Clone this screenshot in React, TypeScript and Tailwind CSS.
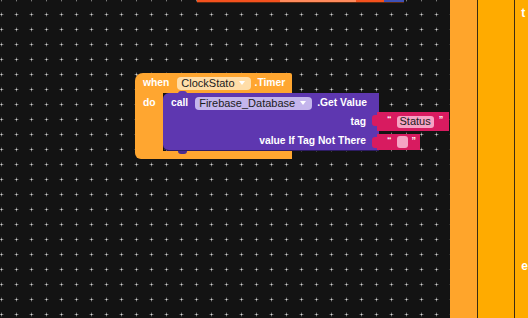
import React from "react";

function Caret({ className }: { className?: string }) {
  return (
    <svg width="6" height="4" viewBox="0 0 6 4" className={className}>
      <path d="M0 0h6L3 4z" fill="currentColor" />
    </svg>
  );
}

function InputTab() {
  return (
    <svg
      className="absolute left-[-5px] top-[3px]"
      width="6"
      height="11"
      viewBox="0 0 6 11"
    >
      <path d="M6 0H3C1 0 0 1 0 3v5c0 2 1 3 3 3h3z" fill="#D81B60" />
    </svg>
  );
}

function GridDots() {
  return (
    <svg className="pointer-events-none absolute inset-0 h-full w-full">
      <defs>
        <pattern
          id="ws-grid"
          x="-6"
          y="7"
          width="15"
          height="15"
          patternUnits="userSpaceOnUse"
        >
          <rect x="6" y="7" width="3" height="1" fill="#7a7a7a" />
          <rect x="7" y="6" width="1" height="3" fill="#7a7a7a" />
          <rect x="5" y="7" width="1" height="1" fill="#3a3a3a" />
          <rect x="9" y="7" width="1" height="1" fill="#3a3a3a" />
          <rect x="7" y="5" width="1" height="1" fill="#3a3a3a" />
          <rect x="7" y="9" width="1" height="1" fill="#3a3a3a" />
          <rect x="7" y="7" width="1" height="1" fill="#cfcfcf" />
        </pattern>
      </defs>
      <rect width="100%" height="100%" fill="url(#ws-grid)" />
    </svg>
  );
}

export default function App() {
  return (
    <div className="flex h-[318px] w-[528px] overflow-hidden whitespace-nowrap bg-[#131313] font-['Liberation_Sans',Arial,sans-serif] text-white">
      {/* workspace */}
      <div className="relative h-full w-[452px]">
        <GridDots />

        {/* block cut off at the top */}
        <div className="absolute left-[197px] top-0 flex h-[3px] border-b border-[#5a2a10]">
          <div className="w-[83px] bg-[#F4511E]" />
          <div className="w-[76px] bg-[#FF8A5C]" />
          <div className="w-[28px] bg-[#F4511E]" />
          <div className="w-[20px] bg-[#3F51B5]" />
        </div>

        {/* when ClockStato.Timer */}
        <div className="absolute left-[135px] top-[73px]">
          <div className="flex h-[20px] w-[157px] items-center rounded-tl-[8px] rounded-tr-[2px] bg-[#FFA630] pl-[8px]">
            <span className="text-[10.3px] font-bold leading-none">when</span>
            <div className="ml-[8px] flex h-[13px] items-center rounded-[4px] bg-[#FFDDA8] pl-[4px] pr-[6px]">
              <span className="text-[11px] leading-none text-[#1b1b1b]">
                ClockStato
              </span>
              <Caret className="ml-[4px] text-white" />
            </div>
            <span className="ml-[4px] text-[10.3px] font-bold leading-none">
              .Timer
            </span>
          </div>

          <div className="flex w-max">
            <div className="w-[28px] bg-[#FFA630] pl-[8px] pt-[4px] text-[10.3px] font-bold leading-[12px]">
              do
            </div>

            {/* call Firebase_Database.Get Value */}
            <div className="relative w-[216px] rounded-l-[6px] border-b border-[#2d1c63] bg-[#5E37B0] pr-[13px]">
              <div className="absolute left-[15px] top-[-2px] h-[3px] w-[9px] rounded-t-[3px] bg-[#5E37B0]" />
              <div className="absolute bottom-[-4px] left-[15px] h-[3px] w-[9px] rounded-b-[3px] bg-[#4a2b90]" />
              <div className="flex h-[20px] items-center pl-[8px]">
                <span className="text-[10.3px] font-bold leading-none">call</span>
                <div className="ml-[7px] flex h-[13px] shrink-0 items-center rounded-[4px] bg-[#C4B5EC] pl-[4px] pr-[6px]">
                  <span className="text-[11px] leading-none text-[#1b1b1b]">
                    Firebase_Database
                  </span>
                  <Caret className="ml-[5px] text-white" />
                </div>
                <span className="ml-[5px] shrink-0 text-[10.3px] font-bold leading-none">
                  .Get Value
                </span>
              </div>
              <div className="flex h-[18px] items-center justify-end">
                <span className="text-[10.3px] font-bold leading-none">tag</span>
              </div>
              <div className="flex h-[19px] items-center justify-end pt-[2px]">
                <span className="text-[10.3px] font-bold leading-none">
                  value If Tag Not There
                </span>
              </div>
            </div>
          </div>

          <div className="h-[8px] w-[157px] rounded-bl-[6px] bg-[#FFA630]" />
        </div>

        {/* text "Status" */}
        <div className="absolute left-[377px] top-[112px] flex h-[19px] w-[72px] items-center bg-[#D81B60] pl-[10px]">
          <InputTab />
          <span className="mb-[5px] text-[9px] font-bold leading-none">“</span>
          <div className="ml-[5px] flex h-[12px] items-center rounded-[3px] bg-[#F5A3C4] px-[3px]">
            <span className="text-[11px] leading-none text-[#1b1b1b]">Status</span>
          </div>
          <span className="mb-[5px] ml-[5px] text-[9px] font-bold leading-none">”</span>
        </div>

        {/* empty text */}
        <div className="absolute left-[377px] top-[134px] flex h-[16px] w-[43px] items-center bg-[#D81B60] pl-[10px]">
          <InputTab />
          <span className="mb-[4px] text-[9px] font-bold leading-none">“</span>
          <div className="ml-[5px] h-[12px] w-[11px] rounded-[3px] bg-[#F5A3C4]" />
          <span className="mb-[4px] ml-[4px] text-[9px] font-bold leading-none">”</span>
        </div>
      </div>

      {/* right side panels */}
      <div className="w-[28px] border-r border-[#3b2c12] bg-[#FFA52B]" />
      <div className="w-[38px] border-r border-[#3b2c12] bg-[#FFAB00]" />
      <div className="flex flex-1 flex-col bg-[#FFAB00] pl-[6px] text-[12px] font-bold leading-none">
        <span className="pt-[7px]">t</span>
        <span className="mt-[241px]">e</span>
      </div>
    </div>
  );
}
